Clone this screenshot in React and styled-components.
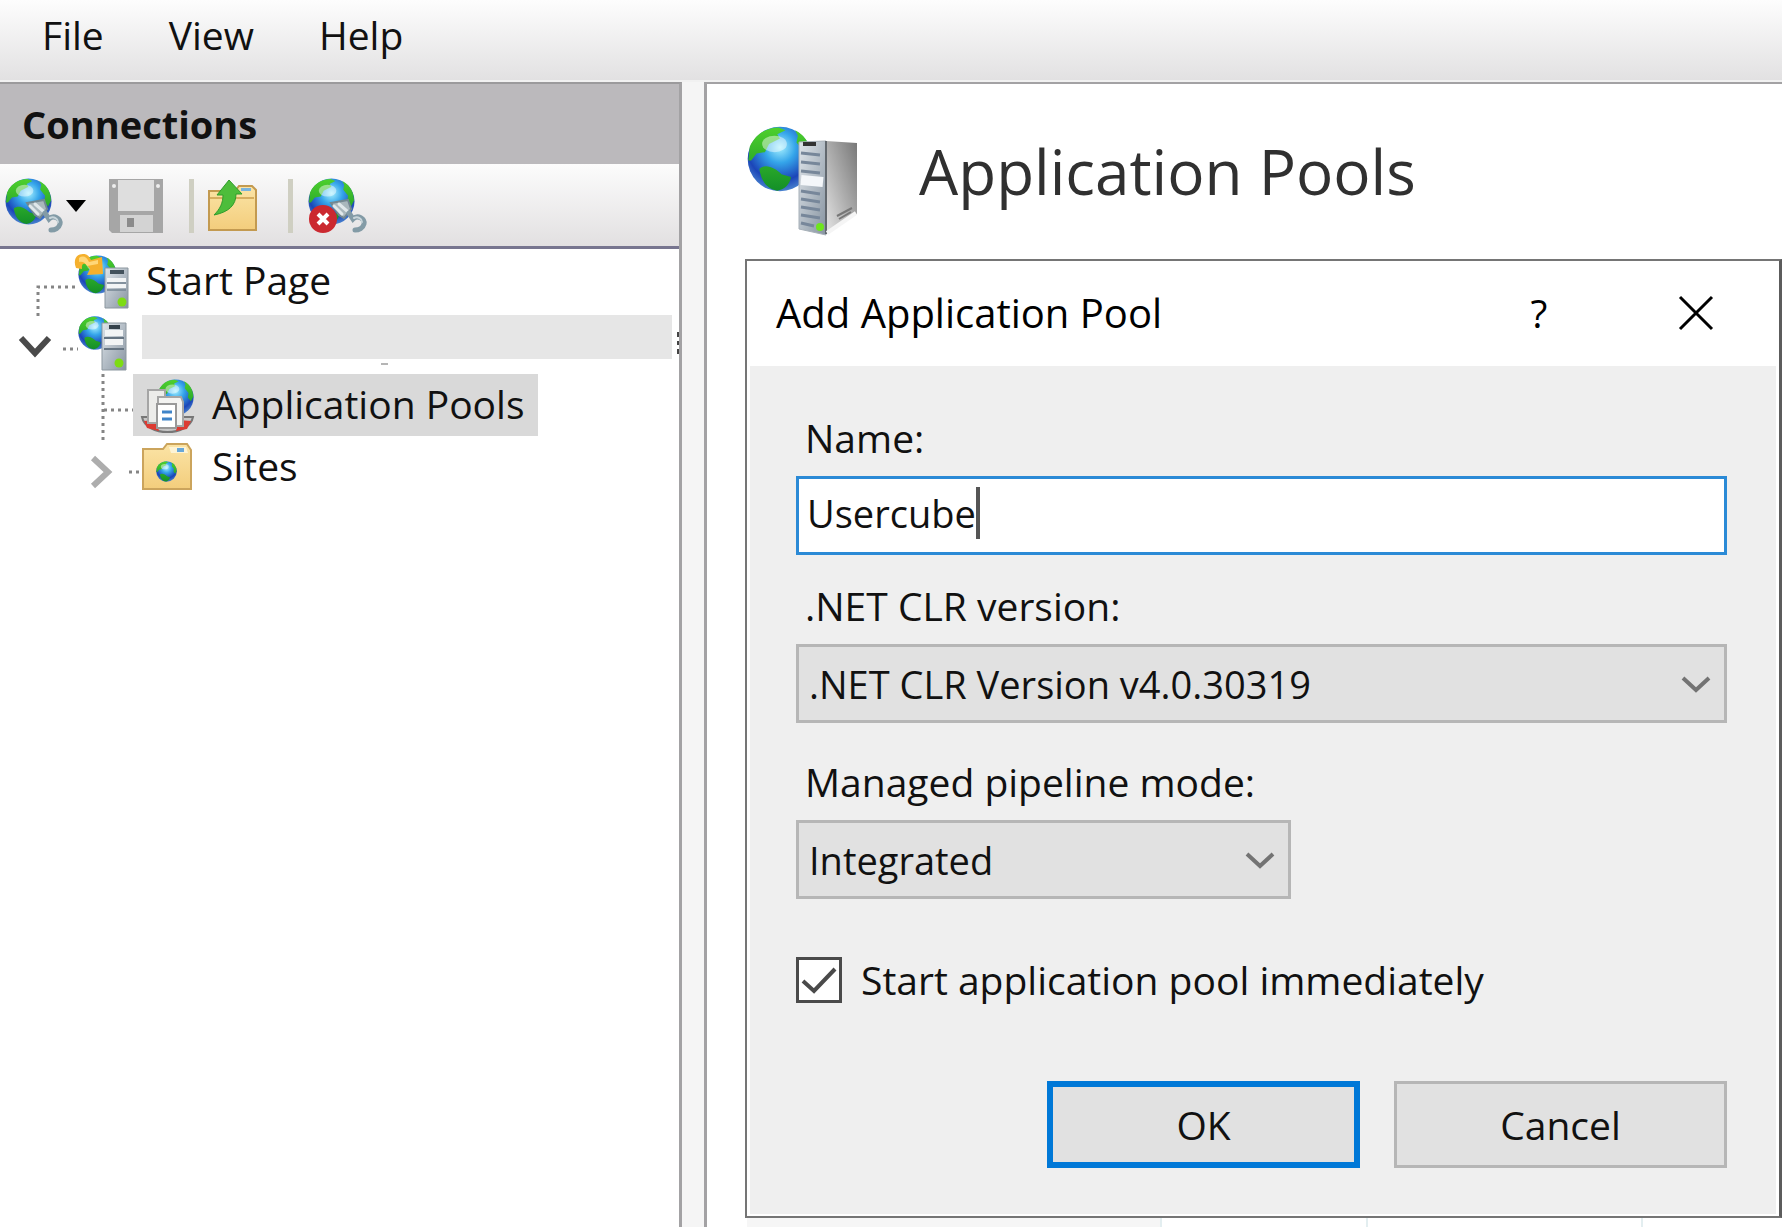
import React, { useState } from "react";
import styled, { createGlobalStyle } from "styled-components";

const GlobalStyle = createGlobalStyle`
  * {
    box-sizing: border-box;
  }
  body {
    margin: 0;
    background: #f5f5f5;
    color: #111;
    font-family: "Open Sans", "Noto Sans", sans-serif;
    font-size: 39px;
    line-height: 48px;
  }
  button, input, select {
    font: inherit;
    color: inherit;
  }
  svg {
    display: block;
    flex: none;
    overflow: visible;
  }
`;

const Page = styled.div`
  display: flex;
  flex-direction: column;
  min-height: 100vh;
`;

const MenuBar = styled.nav`
  display: flex;
  gap: 65px;
  padding: 11px 42px 21px;
  background: linear-gradient(#fdfdfd, #e2e1e2);
  border-bottom: 2px solid #f1f1f1;
`;

const MenuButton = styled.button`
  padding: 0;
  border: 0;
  background: none;
`;

const Main = styled.div`
  display: flex;
  flex: 1;
  gap: 22px;
`;

const Sidebar = styled.aside`
  display: flex;
  flex-direction: column;
  width: 682px;
  flex: none;
  background: #fff;
  border-top: 2px solid #9b9a9c;
  border-right: 3px solid #a3a2a4;
`;

const SidebarTitle = styled.h2`
  margin: 0;
  padding: 16px 22px;
  background: #bbb9bc;
  font-size: 38px;
  line-height: 48px;
  font-weight: 700;
`;

const Toolbar = styled.div`
  display: flex;
  align-items: center;
  height: 85px;
  padding: 2px 0 0 4px;
  background: linear-gradient(#fcfcfc, #e2e0e1);
  border-bottom: 3px solid #77758f;
`;

const ToolButton = styled.button`
  display: flex;
  align-items: center;
  gap: 4px;
  padding: 0;
  border: 0;
  background: none;
`;

const Separator = styled.span`
  width: 5px;
  height: 54px;
  margin: 0 ${(p) => p.$after}px 0 ${(p) => p.$before}px;
  background: #cfcfc2;
`;

const SaveSlot = styled.span`
  margin-left: 22px;
`;

const Tree = styled.ul`
  margin: 0;
  padding: 1px 0 0;
  list-style: none;
`;

const TreeRow = styled.li`
  display: flex;
  align-items: center;
  height: 62px;
`;

const TreeItem = styled.a`
  display: flex;
  align-items: center;
  gap: 16px;
  height: 62px;
  padding: 0 13px 0 8px;
  color: inherit;
  text-decoration: none;
  background: ${(p) => (p.$selected ? "#d9d9d9" : "transparent")};
`;

const TreeText = styled.span`
  padding-bottom: 2px;
`;

const HiddenName = styled.span`
  position: relative;
  align-self: flex-start;
  flex: 1;
  height: 44px;
  margin: 3px 5px 0 14px;
  background: #e6e6e6;

  &::after {
    content: "";
    position: absolute;
    left: 239px;
    top: 48px;
    width: 7px;
    height: 2px;
    background: #b5b5b5;
  }
`;

const Content = styled.main`
  display: flex;
  flex-direction: column;
  flex: 1;
  min-width: 0;
  padding: 42px 0 0 38px;
  background: #fff;
  border-top: 2px solid #a3a2a4;
  border-left: 3px solid #a3a2a4;
`;

const Heading = styled.header`
  display: flex;
  gap: 62px;
  height: 133px;
  padding-left: 2px;
`;

const PageTitle = styled.h1`
  margin: 0;
  font-size: 62px;
  line-height: 90px;
  font-weight: 400;
  color: #303030;
`;

const Dialog = styled.section`
  border: 2px solid #757575;
  border-right: 3px solid #5c5c5c;
  background: #fff;
`;

const TitleBar = styled.div`
  display: flex;
  align-items: center;
  height: 105px;
  padding: 0 64px 2px 29px;
  color: #000;
`;

const DialogTitle = styled.h2`
  flex: 1;
  margin: 0;
  font-size: 40px;
  line-height: 48px;
  font-weight: 400;
`;

const TitleButton = styled.button`
  width: 38px;
  margin-left: 119px;
  padding: 0;
  border: 0;
  background: none;
  display: flex;
  justify-content: center;
`;

const Form = styled.form`
  display: flex;
  flex-direction: column;
  margin: 0 3px 2px;
  padding: 48px 49px 46px 46px;
  background: #efefef;
`;

const FieldLabel = styled.label`
  margin: 0 0 14px 9px;
`;

const TextField = styled.div`
  display: flex;
  align-items: flex-start;
  height: 79px;
  margin-bottom: 27px;
  padding: 8px;
  background: #fff;
  border: 3px solid #2b8ad6;
`;

const TextInput = styled.input`
  field-sizing: content;
  height: 52px;
  padding: 0;
  border: 0;
  outline: 0;
  background: none;
  font-size: 38px;
`;

const Caret = styled.span`
  width: 4px;
  height: 52px;
  background: #555;
`;

const SelectBox = styled.div`
  position: relative;
  width: ${(p) => p.$width};
  margin-bottom: ${(p) => p.$below}px;

  svg {
    position: absolute;
    right: 16px;
    top: 32px;
    pointer-events: none;
  }
`;

const Select = styled.select`
  appearance: none;
  width: 100%;
  height: 79px;
  padding: 0 60px 0 10px;
  border: 3px solid #b6b6b6;
  border-radius: 0;
  background: #e1e1e1;
  font-size: 38px;
`;

const CheckRow = styled.label`
  display: flex;
  align-items: center;
  gap: 19px;
  margin-bottom: 77px;
`;

const CheckBox = styled.input`
  appearance: none;
  width: 46px;
  height: 46px;
  margin: 0;
  border: 3px solid #4a4a4a;
  background: #fff;
`;

const CheckHolder = styled.span`
  position: relative;

  input {
    display: block;
  }
  svg {
    position: absolute;
    left: 6px;
    top: 11px;
    pointer-events: none;
  }
`;

const Buttons = styled.div`
  display: flex;
  justify-content: flex-end;
  gap: 34px;
`;

const PushButton = styled.button`
  width: ${(p) => (p.$primary ? 313 : 333)}px;
  height: 87px;
  padding: 0;
  border: ${(p) => (p.$primary ? "6px solid #0078d7" : "3px solid #b6b6b6")};
  background: #e1e1e1;
`;

const ListEdge = styled.div`
  display: grid;
  grid-template-columns: 415px 206px 275px 1fr;
  flex: 1;
  padding-left: 2px;

  span {
    border-right: 2px solid #e3eef0;
  }
  span:first-child {
    background: #f6f6f6;
  }
`;

const Defs = () => (
  <svg width="0" height="0" style={{ position: "absolute" }} aria-hidden="true">
    <defs>
      <radialGradient id="sea" cx="0.5" cy="0.32" r="0.68">
        <stop offset="0" stopColor="#a5f0ff" />
        <stop offset="0.35" stopColor="#35a5ea" />
        <stop offset="0.75" stopColor="#1b45b8" />
        <stop offset="1" stopColor="#4a84cf" />
      </radialGradient>
      <linearGradient id="land" x1="0" y1="0" x2="0" y2="1">
        <stop offset="0" stopColor="#4ed02c" />
        <stop offset="1" stopColor="#138f28" />
      </linearGradient>
      <linearGradient id="front" x1="0" y1="0" x2="1" y2="1">
        <stop offset="0" stopColor="#dfe5ea" />
        <stop offset="1" stopColor="#8794a1" />
      </linearGradient>
      <linearGradient id="side" x1="1" y1="0" x2="0" y2="1">
        <stop offset="0" stopColor="#777" />
        <stop offset="0.5" stopColor="#adadad" />
        <stop offset="1" stopColor="#e6e6e6" />
      </linearGradient>
      <linearGradient id="folder" x1="0" y1="0" x2="0" y2="1">
        <stop offset="0" stopColor="#fbe4a6" />
        <stop offset="1" stopColor="#f3cd7c" />
      </linearGradient>
    </defs>
  </svg>
);

// drawn on a 48 x 48 area
const Globe = ({ x = 0, y = 0, size = 48 }) => (
  <g transform={`translate(${x} ${y}) scale(${size / 48})`}>
    <circle cx="24" cy="24" r="23.5" fill="url(#sea)" />
    <path
      d="M2 15C6 6 14 1 23 1l5 2-6 3 2 3-8 4-3 6-6 1-4 5-2 0zM35 3c8 4 12 12 12 20l-3 6-4-5 1-6-5-6 1-5zM9 31c5-4 12 0 16 4l7 2c-1 6-5 9-10 10-8-1-12-8-13-16z"
      fill="url(#land)"
    />
    <ellipse cx="20" cy="13" rx="9" ry="6" fill="#fff" opacity="0.45" />
  </g>
);

const Plug = () => (
  <g fill="none" strokeLinecap="round">
    <path d="M23 26l17-3 3 9-7 9-5-3z" fill="#a9b7bc" stroke="#728891" strokeWidth="2" />
    <path d="M26 29l8 8M31 27l8 7" stroke="#e0e8ea" strokeWidth="3" />
    <path d="M41 36l4 6c5-5 12 0 11 5-1 4-5 6-9 6" stroke="#839ba6" strokeWidth="5" />
    <path d="M46 41c4-2 8 1 8 4" stroke="#c8d5da" strokeWidth="2" />
  </g>
);

const ConnectIcon = () => (
  <svg width="58" height="58" viewBox="0 0 58 58">
    <Globe x={1} y={1} size={47} />
    <Plug />
  </svg>
);

const DisconnectIcon = () => (
  <svg width="58" height="58" viewBox="0 0 58 58">
    <Globe x={0} y={1} size={47} />
    <Plug />
    <circle cx="15" cy="42" r="14" fill="#cb2930" />
    <path d="M10 37l10 10M20 37L10 47" stroke="#fff" strokeWidth="4" />
  </svg>
);

const SaveIcon = () => (
  <svg width="56" height="56" viewBox="0 0 56 56">
    <path d="M1 1h54v54H4l-3-3z" fill="#a6a6a6" />
    <path d="M10 2h36v31H10z" fill="#dedede" />
    <path d="M12 37h33v17H12z" fill="#d3d3d3" />
    <path d="M19 40h7v9h-7z" fill="#8b8b8b" />
    <circle cx="6" cy="8" r="2" fill="#eee" />
    <circle cx="50" cy="8" r="2" fill="#eee" />
  </svg>
);

const UpFolderIcon = () => (
  <svg width="50" height="52" viewBox="0 0 50 52">
    <path d="M2 11h26l4-5h13l4 4v40H2z" fill="url(#folder)" stroke="#c39a50" strokeWidth="2" />
    <path d="M34 8h10v3H34z" fill="#79b4dd" />
    <path d="M3 18h44" stroke="#d6ae60" strokeWidth="2" />
    <path d="M22 0l13 14h-6c0 11-7 18-22 21 6-6 9-12 9-20h-6z" fill="#4dbd3b" stroke="#2f9c2c" />
  </svg>
);

const StartPageIcon = () => (
  <svg width="56" height="56" viewBox="0 0 56 56">
    <Globe x={4} y={2} size={39} />
    <path
      d="M2 15c-3-8 0-14 7-14 4 0 6 2 8 6l11-3 1 17-16 1 3-6c-4-7-9-7-8 0z"
      fill="#f5b02d"
    />
    <path d="M5 5c4-3 8-1 10 4l9-2v4l-11 2c-2-4-5-5-8-4z" fill="#ffd778" />
    <path d="M31 15h23v40H31z" fill="url(#front)" stroke="#8c979f" />
    <path d="M36 19h14" stroke="#43525c" strokeWidth="4" />
    <path d="M33 27h19M33 33h19" stroke="#f3f5f6" strokeWidth="4" />
    <path d="M33 30h19M33 37h19" stroke="#758593" strokeWidth="1.5" />
    <circle cx="48" cy="49" r="4.5" fill="#7ddc13" />
  </svg>
);

const ServerIcon = () => (
  <svg width="50" height="56" viewBox="0 0 50 56">
    <Globe x={0} y={1} size={34} />
    <path d="M24 8h24v47H24z" fill="url(#front)" stroke="#8c979f" />
    <path d="M31 12h11" stroke="#34414b" strokeWidth="4" />
    <path d="M27 18h18M27 27h18" stroke="#f3f5f6" strokeWidth="6" />
    <path d="M26 23h20M26 34h20" stroke="#657482" strokeWidth="2" />
    <circle cx="41" cy="48" r="4.5" fill="#7ddc13" />
  </svg>
);

const PoolsIcon = () => (
  <svg width="55" height="56" viewBox="0 0 55 56">
    <Globe x={16} y={2} size={37} />
    <path d="M1 40c4 20 47 20 51 0z" fill="#c7c7c7" stroke="#777" strokeWidth="2" />
    <path d="M3 44l12-1 3 11-12-3zM37 43l13 1-4 8-11 2z" fill="#dc3a32" />
    <path d="M7 13h17v33H7z" fill="#ececea" stroke="#a5a5a5" strokeWidth="2" />
    <path d="M17 20h23l2 5v24H17z" fill="#f3f3f1" stroke="#a5a5a5" strokeWidth="2" />
    <path d="M16 27h19v24H16z" fill="#fff" stroke="#999" strokeWidth="2" />
    <path d="M21 35h10M21 42h10" stroke="#3f84c8" strokeWidth="3" />
  </svg>
);

const SitesIcon = () => (
  <svg width="54" height="48" viewBox="0 0 54 48">
    <path d="M1 6h20l4-5h20l4 6v39H1z" fill="url(#folder)" stroke="#cba45c" strokeWidth="2" />
    <path d="M27 4h17l2 6H29z" fill="#fdf3d4" />
    <path d="M35 5h7v4h-7z" fill="#68a7d8" />
    <Globe x={14} y={18} size={21} />
  </svg>
);

const BigServerIcon = () => (
  <svg width="110" height="110" viewBox="0 0 110 110">
    <Globe x={0} y={0} size={66} />
    <path d="M52 16l27-1v94l-27-6z" fill="url(#front)" stroke="#a7b0b8" />
    <path d="M56 18h13" stroke="#333" strokeWidth="4" />
    <path
      d="M54 27l19 2M54 36l19 2M54 45l19 2M54 65l19 3M54 73l19 3M54 81l19 3M54 89l19 3M54 97l13 3"
      stroke="#77879a"
      strokeWidth="3"
    />
    <path d="M54 54l22 2" stroke="#f4f7fa" strokeWidth="10" />
    <path d="M79 15l31 2v71l-31 21z" fill="url(#side)" />
    <path d="M79 15v93" stroke="#62686e" strokeWidth="2" />
    <path d="M80 107l29-20" stroke="#f5f5f5" strokeWidth="4" />
    <path d="M90 90l15-8M92 93l12-7" stroke="#777" strokeWidth="2" />
    <circle cx="73" cy="101" r="4" fill="#6ee61c" />
  </svg>
);

const Chevron = () => (
  <svg width="30" height="18" viewBox="0 0 30 18">
    <path d="M2 2l13 12L28 2" fill="none" stroke="#737373" strokeWidth="4" />
  </svg>
);

// dotted connectors and the expander arrow to the left of a tree item
const Gutter = ({ width, lines, arrow, arrowColor }) => (
  <svg width={width} height="62" fill="none">
    <path d={lines} stroke="#858585" strokeWidth="3" strokeDasharray="3 4" />
    {arrow && <path d={arrow} stroke={arrowColor} strokeWidth="6" />}
  </svg>
);

export default function App() {
  const [name, setName] = useState("Usercube");
  const [version, setVersion] = useState("v4");
  const [mode, setMode] = useState("integrated");
  const [start, setStart] = useState(true);

  return (
    <Page>
      <GlobalStyle />
      <Defs />
      <MenuBar>
        <MenuButton>File</MenuButton>
        <MenuButton>View</MenuButton>
        <MenuButton>Help</MenuButton>
      </MenuBar>
      <Main>
        <Sidebar>
          <SidebarTitle>Connections</SidebarTitle>
          <Toolbar>
            <ToolButton aria-label="Connect">
              <ConnectIcon />
              <svg width="20" height="12" viewBox="0 0 20 12">
                <path d="M0 0h20L10 12z" fill="#000" />
              </svg>
            </ToolButton>
            <SaveSlot>
              <ToolButton aria-label="Save">
                <SaveIcon />
              </ToolButton>
            </SaveSlot>
            <Separator $before={25} $after={13} />
            <ToolButton aria-label="Up">
              <UpFolderIcon />
            </ToolButton>
            <Separator $before={31} $after={15} />
            <ToolButton aria-label="Disconnect">
              <DisconnectIcon />
            </ToolButton>
          </Toolbar>
          <Tree>
            <TreeRow>
              <Gutter width={66} lines="M75 37H38V66" />
              <TreeItem href="#start">
                <StartPageIcon />
                <TreeText>Start Page</TreeText>
              </TreeItem>
            </TreeRow>
            <TreeRow>
              <Gutter
                width={78}
                lines="M63 37H78"
                arrow="M21 26l14 15l14-15"
                arrowColor="#4a4a4a"
              />
              <ServerIcon />
              <HiddenName />
              <svg width="2" height="22" viewBox="0 0 2 22">
                <path d="M0 0h2v5H0zM0 9h2v4H0zM0 17h2v5H0z" fill="#444" />
              </svg>
            </TreeRow>
            <TreeRow>
              <Gutter width={133} lines="M103 0V66M104 36H140" />
              <TreeItem href="#pools" $selected>
                <PoolsIcon />
                <TreeText>Application Pools</TreeText>
              </TreeItem>
            </TreeRow>
            <TreeRow>
              <Gutter
                width={134}
                lines="M129 36H140"
                arrow="M93 22l15 14l-15 14"
                arrowColor="#adadad"
              />
              <TreeItem href="#sites">
                <SitesIcon />
                <TreeText>Sites</TreeText>
              </TreeItem>
            </TreeRow>
          </Tree>
        </Sidebar>
        <Content>
          <Heading>
            <BigServerIcon />
            <PageTitle>Application Pools</PageTitle>
          </Heading>
          <Dialog role="dialog" aria-labelledby="dialog-title">
            <TitleBar>
              <DialogTitle id="dialog-title">Add Application Pool</DialogTitle>
              <TitleButton>?</TitleButton>
              <TitleButton aria-label="Close">
                <svg width="34" height="34" viewBox="0 0 34 34">
                  <path d="M1 1l32 32M33 1L1 33" stroke="#000" strokeWidth="3" />
                </svg>
              </TitleButton>
            </TitleBar>
            <Form onSubmit={(e) => e.preventDefault()}>
              <FieldLabel htmlFor="name">Name:</FieldLabel>
              <TextField>
                <TextInput
                  id="name"
                  value={name}
                  onChange={(e) => setName(e.target.value)}
                />
                <Caret />
              </TextField>
              <FieldLabel htmlFor="version">.NET CLR version:</FieldLabel>
              <SelectBox $width="100%" $below={35}>
                <Select
                  id="version"
                  value={version}
                  onChange={(e) => setVersion(e.target.value)}
                >
                  <option value="v4">.NET CLR Version v4.0.30319</option>
                </Select>
                <Chevron />
              </SelectBox>
              <FieldLabel htmlFor="mode">Managed pipeline mode:</FieldLabel>
              <SelectBox $width="495px" $below={57}>
                <Select
                  id="mode"
                  value={mode}
                  onChange={(e) => setMode(e.target.value)}
                >
                  <option value="integrated">Integrated</option>
                </Select>
                <Chevron />
              </SelectBox>
              <CheckRow>
                <CheckHolder>
                  <CheckBox
                    type="checkbox"
                    checked={start}
                    onChange={(e) => setStart(e.target.checked)}
                  />
                  {start && (
                    <svg width="34" height="26" viewBox="0 0 34 26">
                      <path d="M1 13l11 10L33 1" fill="none" stroke="#4a4a4a" strokeWidth="4" />
                    </svg>
                  )}
                </CheckHolder>
                Start application pool immediately
              </CheckRow>
              <Buttons>
                <PushButton $primary type="submit">
                  OK
                </PushButton>
                <PushButton type="button">Cancel</PushButton>
              </Buttons>
            </Form>
          </Dialog>
          <ListEdge>
            <span />
            <span />
            <span />
          </ListEdge>
        </Content>
      </Main>
    </Page>
  );
}
